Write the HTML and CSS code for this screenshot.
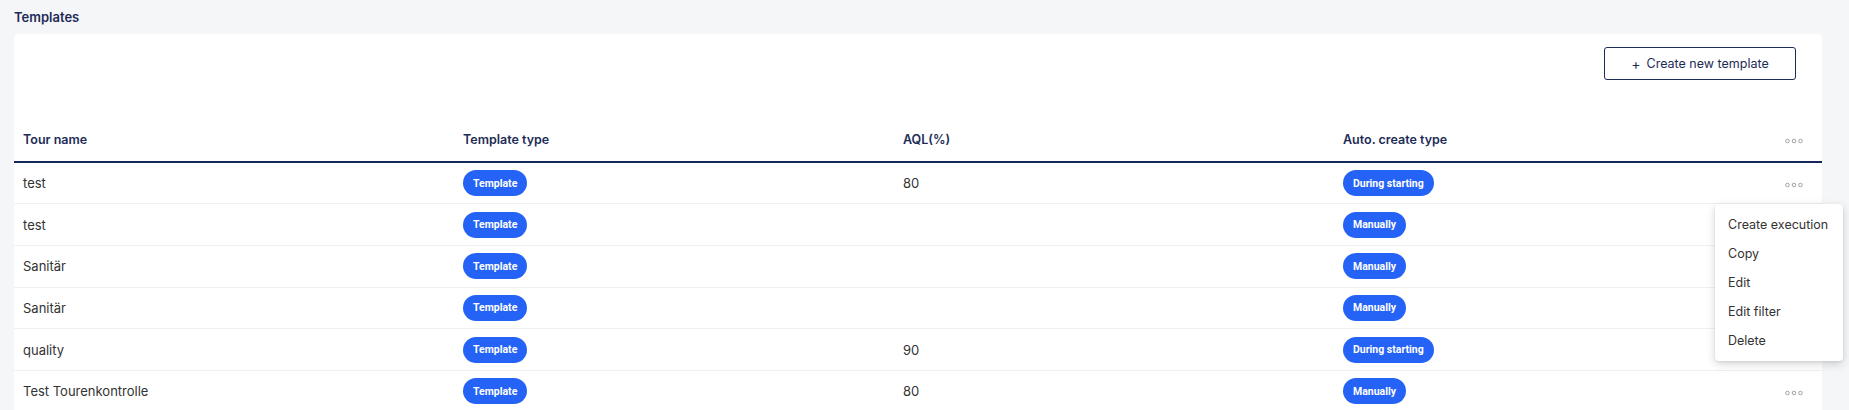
FILE: index.html
```html
<!DOCTYPE html>
<html lang="en">
<head>
<meta charset="utf-8">
<title>Templates</title>
<link rel="stylesheet" href="styles.css">
</head>
<body>
<div class="page">
  <h1 class="title">Templates</h1>
  <div class="card">
    <div class="toolbar">
      <button class="btn-outline" type="button"><span class="plus">+</span>Create new template</button>
    </div>
    <table class="grid">
      <colgroup>
        <col><col><col><col><col class="col-act">
      </colgroup>
      <thead>
        <tr>
          <th>Tour name</th>
          <th>Template type</th>
          <th>AQL(%)</th>
          <th>Auto. create type</th>
          <th class="act"><svg class="dots" viewBox="0 0 18 6" width="18" height="6"><circle cx="2.5" cy="3" r="1.8"/><circle cx="9" cy="3" r="1.8"/><circle cx="15.5" cy="3" r="1.8"/></svg></th>
        </tr>
      </thead>
      <tbody>
        <tr>
          <td>test</td>
          <td><span class="badge">Template</span></td>
          <td>80</td>
          <td><span class="badge">During starting</span></td>
          <td class="act"><svg class="dots" viewBox="0 0 18 6" width="18" height="6"><circle cx="2.5" cy="3" r="1.8"/><circle cx="9" cy="3" r="1.8"/><circle cx="15.5" cy="3" r="1.8"/></svg></td>
        </tr>
        <tr>
          <td>test</td>
          <td><span class="badge">Template</span></td>
          <td></td>
          <td><span class="badge">Manually</span></td>
          <td class="act"><svg class="dots" viewBox="0 0 18 6" width="18" height="6"><circle cx="2.5" cy="3" r="1.8"/><circle cx="9" cy="3" r="1.8"/><circle cx="15.5" cy="3" r="1.8"/></svg></td>
        </tr>
        <tr>
          <td>Sanitär</td>
          <td><span class="badge">Template</span></td>
          <td></td>
          <td><span class="badge">Manually</span></td>
          <td class="act"><svg class="dots" viewBox="0 0 18 6" width="18" height="6"><circle cx="2.5" cy="3" r="1.8"/><circle cx="9" cy="3" r="1.8"/><circle cx="15.5" cy="3" r="1.8"/></svg></td>
        </tr>
        <tr>
          <td>Sanitär</td>
          <td><span class="badge">Template</span></td>
          <td></td>
          <td><span class="badge">Manually</span></td>
          <td class="act"><svg class="dots" viewBox="0 0 18 6" width="18" height="6"><circle cx="2.5" cy="3" r="1.8"/><circle cx="9" cy="3" r="1.8"/><circle cx="15.5" cy="3" r="1.8"/></svg></td>
        </tr>
        <tr>
          <td>quality</td>
          <td><span class="badge">Template</span></td>
          <td>90</td>
          <td><span class="badge">During starting</span></td>
          <td class="act"><svg class="dots" viewBox="0 0 18 6" width="18" height="6"><circle cx="2.5" cy="3" r="1.8"/><circle cx="9" cy="3" r="1.8"/><circle cx="15.5" cy="3" r="1.8"/></svg></td>
        </tr>
        <tr>
          <td>Test Tourenkontrolle</td>
          <td><span class="badge">Template</span></td>
          <td>80</td>
          <td><span class="badge">Manually</span></td>
          <td class="act"><svg class="dots" viewBox="0 0 18 6" width="18" height="6"><circle cx="2.5" cy="3" r="1.8"/><circle cx="9" cy="3" r="1.8"/><circle cx="15.5" cy="3" r="1.8"/></svg></td>
        </tr>
      </tbody>
    </table>
  </div>
  <ul class="menu">
    <li>Create execution</li>
    <li>Copy</li>
    <li>Edit</li>
    <li>Edit filter</li>
    <li>Delete</li>
  </ul>
</div>
</body>
</html>
```

FILE: styles.css
```css
* { box-sizing: border-box; }
html, body { margin: 0; padding: 0; }
body {
  background: #f5f6f8;
  font-family: Inter, "Noto Sans", "Liberation Sans", sans-serif;
  color: #333333;
  height: 410px;
  overflow: hidden;
}
.page {
  position: relative;
  padding: 0 27px 0 14px;
}
.title {
  margin: 0;
  height: 34px;
  line-height: 34px;
  font-size: 13px;
  font-weight: 600;
  color: #1d2c57;
}
.card {
  background: #ffffff;
  border-radius: 4px 4px 0 0;
  height: 376px;
}
.toolbar {
  display: flex;
  justify-content: flex-end;
  padding: 13px 26px 0 0;
  height: 84px;
}
.btn-outline {
  height: 33px;
  width: 192px;
  background: #ffffff;
  border: 1px solid #1d2c57;
  border-radius: 3px;
  color: #1d2c57;
  font-family: Inter, "Noto Sans", sans-serif;
  font-size: 12.5px;
  display: flex;
  align-items: center;
  justify-content: center;
  gap: 6px;
  padding: 0;
}
.plus { font-size: 14px; line-height: 1; }
.grid {
  width: 100%;
  border-collapse: collapse;
  table-layout: fixed;
}
.col-act { width: 48px; }
.grid th {
  height: 44px;
  text-align: left;
  padding: 0 9px;
  font-size: 12.5px;
  font-weight: 600;
  color: #1d2c57;
  border-bottom: 2px solid #16275a;
  vertical-align: middle;
}
.grid td {
  height: 41.7px;
  padding: 0 9px;
  font-size: 13px;
  color: #333333;
  border-bottom: 1px solid #eef0f3;
  vertical-align: middle;
}
.grid .act {
  text-align: right;
  padding: 0 19px 0 0;
}
.dots { display: inline-block; vertical-align: middle; }
.dots circle { fill: none; stroke: #9a9a9a; stroke-width: 0.9; }
.badge {
  display: inline-flex;
  align-items: center;
  height: 26px;
  padding: 0 10px;
  border-radius: 13px;
  background: #2563f6;
  color: #ffffff;
  font-family: Roboto, "Liberation Sans", sans-serif;
  font-size: 10.5px;
  font-weight: 700;
  vertical-align: middle;
}
.menu {
  position: absolute;
  left: 1715px;
  top: 204px;
  width: 128px;
  margin: 0;
  padding: 6px 0;
  list-style: none;
  background: #ffffff;
  border-radius: 4px;
  box-shadow: 0 3px 10px rgba(0, 0, 0, 0.16), 0 1px 3px rgba(0, 0, 0, 0.08);
}
.menu li {
  height: 29px;
  line-height: 29px;
  padding-left: 13px;
  font-size: 12.5px;
  color: #333333;
  white-space: nowrap;
}
```
